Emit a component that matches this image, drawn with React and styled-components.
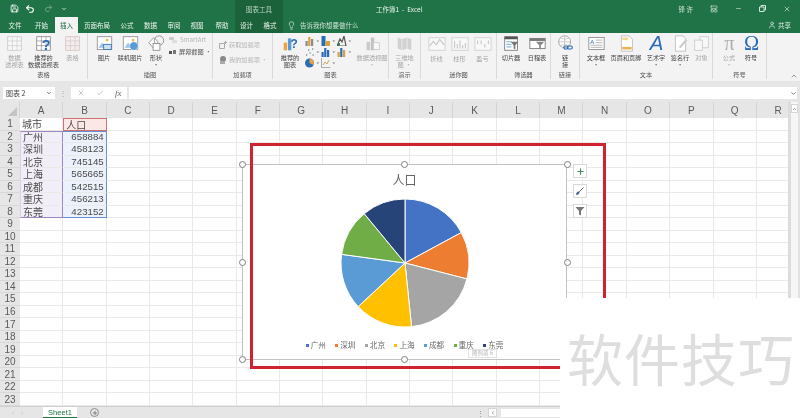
import React from "react";
import styled, { createGlobalStyle } from "styled-components";
import { Save, Undo2, Redo2, X, Minus, Check, Lightbulb, User, Plus, ChevronUp, ChevronDown, ChevronLeft, ChevronRight, LayoutPanelTop } from "lucide-react";

const GlobalStyle = createGlobalStyle`
  html, body { margin: 0; padding: 0; background: #fff; }
  body { font-family: "Noto Sans CJK SC", "Liberation Sans", sans-serif; }
`;

const green = "#1f7346";
const CJK = `"Liberation Sans", "Noto Sans CJK SC", sans-serif`;

const Page = styled.div`
  width: 800px;
  height: 418px;
  position: relative;
  overflow: hidden;
  display: flex;
  flex-direction: column;
  background: #e6e6e6;
  filter: blur(0.3px);
`;

/* ---- title bar + tabs ---- */
const Head = styled.div`
  height: 33px;
  background: ${green};
  position: relative;
  display: flex;
  flex-direction: column;
  color: #fff;
`;

const ContextBand = styled.div`
  position: absolute;
  left: 235px;
  top: 0;
  width: 48px;
  height: 33px;
  background: #1b6139;
`;

const TitleRow = styled.div`
  height: 17px;
  display: flex;
  align-items: center;
  position: relative;
  padding-left: 10px;
`;

const QuickIcon = styled.span`
  display: inline-flex;
  width: ${p => p.$w || 18}px;
  opacity: ${p => p.$dim ? 0.45 : 1};
`;

const ContextLabel = styled.span`
  position: absolute;
  left: 246px;
  font-size: 6.5px;
  color: #b7d3c3;
`;

const DocTitle = styled.span`
  position: absolute;
  left: 376px;
  font-size: 6.5px;
  color: #eef5f0;
  white-space: pre;
`;

const WindowBtns = styled.div`
  position: absolute;
  right: 9px;
  top: 0;
  height: 17px;
  display: flex;
  align-items: center;
  gap: 17px;
  font-size: 6.5px;
  color: #d5e6db;
`;

const TabRow = styled.div`
  height: 16px;
  display: flex;
  align-items: stretch;
  position: relative;
  padding-left: 2px;
`;

const Tab = styled.div`
  width: ${p => p.$w}px;
  font-size: 6.5px;
  display: flex;
  align-items: center;
  justify-content: center;
  color: ${p => p.$active ? "#1f6e42" : "#eef5f0"};
  background: ${p => p.$active ? "#f3f3f3" : "transparent"};
`;

const TellMe = styled.div`
  margin-left: 5px;
  display: flex;
  align-items: center;
  gap: 4px;
  font-size: 6.5px;
  color: #cfe2d6;
`;

const Share = styled.div`
  position: absolute;
  right: 9px;
  top: 0;
  height: 15px;
  display: flex;
  align-items: center;
  gap: 2px;
  font-size: 6.5px;
  color: #e3efe8;
`;

/* ---- ribbon ---- */
const Ribbon = styled.div`
  height: 48px;
  background: #f3f3f3;
  display: flex;
  position: relative;
`;

const Group = styled.div`
  width: ${p => p.$w}px;
  border-right: ${p => p.$last ? "none" : "1px solid #dadada"};
  margin-bottom: 2px;
  box-sizing: border-box;
  display: flex;
  flex-direction: column;
`;

const GroupBody = styled.div`
  flex: 1;
  display: flex;
  padding-left: ${p => p.$pad || 0}px;
  min-height: 0;
`;

const GroupName = styled.div`
  height: 9px;
  line-height: 9px;
  text-align: center;
  font-size: 6.2px;
  color: #555;
`;

const Big = styled.div`
  width: ${p => p.$w || 26}px;
  flex: none;
  display: flex;
  flex-direction: column;
  align-items: center;
  padding-top: 2px;
  opacity: ${p => p.$off ? 0.45 : 1};
`;

const BigLabel = styled.div`
  margin-top: 2px;
  font-size: 6.2px;
  line-height: 7.4px;
  color: #444;
  text-align: center;
  white-space: pre;
`;

const SmallStack = styled.div`
  display: flex;
  flex-direction: column;
  gap: ${p => p.$gap || 4}px;
  padding-top: ${p => p.$top || 3}px;
  padding-left: ${p => p.$left || 0}px;
`;

const SmallBtn = styled.div`
  display: flex;
  align-items: center;
  gap: 2px;
  height: 9px;
  font-size: 6.2px;
  color: ${p => p.$off ? "#b5b5b5" : "#555"};
  white-space: nowrap;
`;

const MiniGrid = styled.div`
  display: grid;
  grid-template-columns: repeat(3, 16px);
  grid-auto-rows: 11px;
  padding: 3px 0 0 3px;
  width: 48px;
  flex: none;
`;

const Collapse = styled.span`
  position: absolute;
  right: 2px;
  bottom: 1px;
  display: inline-flex;
  color: #666;
`;

const Ico = ({ children, size = 17 }) => (
  <svg width={size} height={size} viewBox="0 0 20 20" fill="none" overflow="visible">{children}</svg>
);

const Sheetish = ({ color = "#9a9a9a", fill = "#fff" }) => (
  <>
    <rect x="2" y="2" width="16" height="16" fill={fill} stroke={color} strokeWidth="1" />
    <path d="M2 7h16M2 12.5h16M7.5 2v16M13 2v16" stroke={color} strokeWidth=".8" />
  </>
);

const Picture = () => (
  <>
    <rect x="1.5" y="2" width="17" height="15" fill="#fff" stroke="#8d8d8d" />
    <path d="M3 15l4-6 3 3 2-2 5 5z" fill="#9cc3e6" />
    <circle cx="13" cy="6" r="1.6" fill="#f0b54a" />
  </>
);

const Spark = ({ d }) => (
  <Ico size={18}>
    <rect x="1" y="3" width="18" height="14" fill="#fff" stroke="#a5a5a5" />
    <path d={d} stroke="#8f8f8f" strokeWidth="1.2" />
  </Ico>
);

const Caret = () => <path d="M11.5 4.5l1.3 1.5 1.3-1.5z" fill="#777" />;

const Mini = ({ a, b }) => (
  <svg width="15" height="10" viewBox="0 0 15 10">
    <rect x="0.5" y="5" width="2.2" height="5" fill={a} />
    <rect x="3.2" y="1" width="2.2" height="9" fill={b} />
    <rect x="6" y="3" width="2.2" height="7" fill={a} />
    <Caret />
  </svg>
);

const Block = ({ a, b }) => (
  <svg width="15" height="10" viewBox="0 0 15 10">
    <rect x="0.5" y="0" width="4" height="10" fill={a} />
    <rect x="4.5" y="5" width="4.5" height="5" fill={b} />
    <Caret />
  </svg>
);

const Peak = ({ a, b }) => (
  <svg width="15" height="10" viewBox="0 0 15 10">
    <path d="M0 10L3 3l2 3 2-6 2 10z" fill="none" stroke={a} strokeWidth="1.2" />
    <rect x="1" y="7" width="2" height="3" fill={b} />
    <Caret />
  </svg>
);

const Scatter = ({ a }) => (
  <svg width="15" height="10" viewBox="0 0 15 10">
    <path d="M1 8h1.2M3 3h1.2M4.5 6h1.2M7 2h1.2M7.5 8h1.2" stroke={a} strokeWidth="1.6" />
    <Caret />
  </svg>
);

const Donut = ({ a, b }) => (
  <svg width="15" height="10" viewBox="0 0 15 10">
    <circle cx="4.5" cy="5" r="4.5" fill={a} />
    <path d="M4.5 5V.5a4.5 4.5 0 0 1 4 6.5z" fill={b} />
    <Caret />
  </svg>
);

const Axis = ({ a }) => (
  <svg width="15" height="10" viewBox="0 0 15 10">
    <path d="M.5 0v9.5h9" fill="none" stroke="#999" strokeWidth=".8" />
    <path d="M2 7l2-3 2 2 2-4" fill="none" stroke={a} strokeWidth=".9" />
    <Caret />
  </svg>
);

// big symbol-style ribbon icons (WordArt A, pi, omega)
const SymbolIcon = ({ children, color, italic, font = "Liberation Serif" }) => (
  <Ico>
    <text
      x="10"
      y="18"
      textAnchor="middle"
      fontSize="24"
      fontFamily={font}
      fontStyle={italic ? "italic" : "normal"}
      fill={color}
    >
      {children}
    </text>
  </Ico>
);

const TABS = [
  ["文件", 26], ["开始", 27], ["插入", 23], ["页面布局", 38], ["公式", 22], ["数据", 25],
  ["审阅", 22], ["视图", 24], ["帮助", 26], ["设计", 23], ["格式", 24]
];

/* ---- formula bar ---- */
const FormulaBar = styled.div`
  height: 21px;
  box-sizing: border-box;
  padding: 6px 3px 3px;
  display: flex;
  align-items: stretch;
  background: #e6e6e6;
`;

const NameBox = styled.div`
  width: 52px;
  background: #fff;
  display: flex;
  align-items: center;
  justify-content: space-between;
  padding: 0 3px;
  box-sizing: border-box;
  font-size: 7px;
  color: #444;
`;

const Grip = styled.div`
  width: 16px;
  text-align: center;
  font-size: 8px;
  line-height: 12px;
  color: #aaa;
`;

const FxBox = styled.div`
  width: 56px;
  margin-right: 2px;
  background: #fff;
  display: flex;
  align-items: center;
  justify-content: space-around;
  color: #aaa;
`;

const FxText = styled.span`
  font-family: "Liberation Serif", serif;
  font-style: italic;
  font-size: 9px;
  color: #666;
`;

const FormulaInput = styled.div`
  flex: 1;
  background: #fff;
  display: flex;
  align-items: center;
  justify-content: flex-end;
  color: #777;
`;

/* ---- sheet ---- */
const Work = styled.div`
  flex: 1;
  display: flex;
  min-height: 0;
`;

const SheetArea = styled.div`
  flex: 1;
  min-width: 0;
  overflow: hidden;
  background: #fff;
`;

const Table = styled.div`
  display: grid;
  grid-template-columns: 20px repeat(18, 43.35px);
  grid-template-rows: 16px repeat(23, 12.52px);
  width: 800px;
`;

const ColHead = styled.div`
  background: #e6e6e6;
  border-right: 1px solid #d4d4d4;
  box-sizing: border-box;
  display: flex;
  align-items: center;
  justify-content: center;
  font: 10px ${CJK};
  color: #5a5a5a;
`;

const Corner = styled(ColHead)`
  position: relative;
  &::after {
    content: "";
    position: absolute;
    right: 2px;
    bottom: 2px;
    border-style: solid;
    border-width: 0 0 9px 9px;
    border-color: transparent transparent #c4c4c4 transparent;
  }
`;

const RowHead = styled.div`
  background: #e6e6e6;
  border-bottom: 1px solid #d8d8d8;
  box-sizing: border-box;
  display: flex;
  align-items: center;
  justify-content: center;
  font: 10px ${CJK};
  color: #5a5a5a;
`;

const Cell = styled.div`
  box-sizing: border-box;
  border-right: 1px solid #e9e9e9;
  border-bottom: 1px solid #e9e9e9;
  padding: 0 2px;
  display: flex;
  align-items: center;
  justify-content: ${p => p.$num ? "flex-end" : "flex-start"};
  font: ${p => p.$num ? "9.7px" : "10px"} ${CJK};
  color: #4a4a4a;
  background: ${p => p.$tint || "transparent"};
  ${p => p.$edge && `
    border-right: 1px solid ${p.$edge};
    ${p.$left ? `border-left: 1px solid ${p.$left};` : ""}
    ${p.$top ? `border-top: 1px solid ${p.$edge};` : ""}
    ${p.$end ? `border-bottom: 1px solid ${p.$edge};` : ""}
  `}
`;

const VScroll = styled.div`
  width: 12px;
  background: #f6f6f6;
  border-left: 3px solid #dcdcdc;
  border-right: 2px solid #e2e2e2;
  display: flex;
  justify-content: center;
  padding-top: 2px;
  color: #666;
  box-sizing: border-box;
`;

const ScrollCap = styled.span`
  display: inline-flex;
  width: ${p => p.$w || 9}px;
  height: 9px;
  background: #fff;
  border: 1px solid #d5d5d5;
  box-sizing: border-box;
  align-items: center;
  justify-content: center;
`;

/* ---- bottom tab strip ---- */
const SheetTabs = styled.div`
  height: 12px;
  flex: none;
  display: flex;
  align-items: stretch;
  background: #e6e6e6;
  border-top: 1px solid #cfcfcf;
  box-sizing: border-box;
  padding-left: 10px;
  color: #bbb;
`;

const TabNav = styled.div`
  width: 33px;
  display: flex;
  align-items: center;
  gap: 3px;
`;

const SheetTab = styled.div`
  width: 34px;
  background: #fff;
  border-bottom: 1px solid ${green};
  font: 7.5px ${CJK};
  color: ${green};
  display: flex;
  align-items: center;
  justify-content: center;
`;

const AddSheet = styled.span`
  margin: 1px 0 0 13px;
  width: 9px;
  height: 9px;
  border-radius: 50%;
  border: 1px solid #8c8c8c;
  box-sizing: border-box;
  color: #666;
  display: inline-flex;
  align-items: center;
  justify-content: center;
`;

const HBar = styled.div`
  margin-left: auto;
  width: 323px;
  display: flex;
  align-items: center;
  gap: 4px;
  color: #888;
  font-size: 7px;
`;

const HTrack = styled.div`
  flex: 1;
  height: 8px;
  background: #fff;
`;

/* ---- chart + overlays ---- */
const Chart = styled.div`
  position: absolute;
  left: 242px;
  top: 164px;
  width: 325px;
  height: 196px;
  background: #fff;
  border: 1.5px solid #c2c2c2;
  box-sizing: border-box;
  display: flex;
  flex-direction: column;
  align-items: center;
`;

const ChartTitle = styled.div`
  margin-top: 6px;
  height: 17px;
  line-height: 17px;
  font-size: 12px;
  color: #666;
`;

const PieWrap = styled.svg`
  margin-top: 10px;
  display: block;
`;

const Legend = styled.div`
  margin-top: 12px;
  display: flex;
  gap: 9.4px;
  font-size: 7.6px;
  line-height: 10px;
  color: #6a6a6a;
`;

const LegendItem = styled.div`
  display: flex;
  align-items: center;
  gap: 2px;
`;

const Swatch = styled.span`
  width: 3px;
  height: 3px;
  background: ${p => p.$color};
`;

const LegendTip = styled.div`
  position: absolute;
  left: 225px;
  top: 184px;
  width: 29px;
  height: 9px;
  background: #fff;
  border: 1px solid #e2e2e2;
  box-sizing: border-box;
  font-size: 5.5px;
  line-height: 7px;
  text-align: center;
  color: #b5b5b5;
`;

const Handle = styled.span`
  position: absolute;
  left: ${p => p.$x}px;
  top: ${p => p.$y}px;
  width: 5px;
  height: 5px;
  margin: -3.5px 0 0 -3.5px;
  border-radius: 50%;
  background: #fff;
  border: 1px solid #808080;
`;

const SideTools = styled.div`
  position: absolute;
  left: 573px;
  top: 164px;
  display: flex;
  flex-direction: column;
  gap: 6px;
`;

const SideBtn = styled.div`
  width: 14px;
  height: 14px;
  box-sizing: border-box;
  background: #fff;
  border: 1px solid #d9d9d9;
  display: flex;
  align-items: center;
  justify-content: center;
  color: ${p => p.$color};
`;

const RedFrame = styled.div`
  position: absolute;
  left: 250px;
  top: 143px;
  width: 356px;
  height: 226px;
  border: 3px solid #cf2330;
  box-sizing: border-box;
  pointer-events: none;
`;

const Watermark = styled.div`
  position: absolute;
  left: 560px;
  top: 298px;
  width: 240px;
  height: 120px;
  background: #fff;
  padding: 25px 0 0 7px;
  box-sizing: border-box;
  font-size: 56px;
  line-height: 68px;
  letter-spacing: 1px;
  color: #dedede;
  white-space: nowrap;
`;

const DATA = [
  ["广州", 658884, "#4472c4"],
  ["深圳", 458123, "#ed7d31"],
  ["北京", 745145, "#a5a5a5"],
  ["上海", 565665, "#ffc000"],
  ["成都", 542515, "#5b9bd5"],
  ["重庆", 456213, "#70ad47"],
  ["东莞", 423152, "#264478"]
];

const COLS = "ABCDEFGHIJKLMNOPQR".split("");

function Pie({ r = 64 }) {
  const total = DATA.reduce((s, d) => s + d[1], 0);
  const c = r + 1;
  let acc = 0;
  return (
    <PieWrap width={c * 2} height={c * 2}>
      {DATA.map(([name, v, color]) => {
        const a0 = (acc / total) * 2 * Math.PI;
        acc += v;
        const a1 = (acc / total) * 2 * Math.PI;
        const large = a1 - a0 > Math.PI ? 1 : 0;
        const d = `M${c} ${c}L${c + r * Math.sin(a0)} ${c - r * Math.cos(a0)}A${r} ${r} 0 ${large} 1 ${c + r * Math.sin(a1)} ${c - r * Math.cos(a1)}Z`;
        return <path key={name} d={d} fill={color} stroke="#fff" strokeWidth="1" />;
      })}
    </PieWrap>
  );
}

function SheetGrid() {
  const cells = [];
  cells.push(<Corner key="corner" />);
  COLS.forEach(c => cells.push(<ColHead key={c}>{c}</ColHead>));
  for (let r = 1; r <= 23; r++) {
    cells.push(<RowHead key={`r${r}`}>{r}</RowHead>);
    COLS.forEach((c, i) => {
      const row = r >= 2 && r <= 8 ? DATA[r - 2] : null;
      let props = {};
      let text = null;
      if (i === 0 && r === 1) text = "城市";
      if (i === 1 && r === 1) {
        text = "人口";
        props = { $tint: "#fbe8e6", $edge: "#d0706e", $left: "#d0706e", $top: true, $end: true };
      }
      if (row && i === 0) {
        text = row[0];
        props = { $tint: "#f2eef8", $edge: "#9c86bd", $left: "#d8d0e6", $top: r === 2, $end: r === 8 };
      }
      if (row && i === 1) {
        text = row[1];
        props = { $tint: "#ebf2fb", $edge: "#6a8fd0", $top: r === 2, $end: r === 8, $num: true };
      }
      cells.push(<Cell key={`${c}${r}`} {...props}>{text}</Cell>);
    });
  }
  return <Table>{cells}</Table>;
}

const HANDLES = [[242.5, 164], [404.5, 164], [567, 164], [242.5, 262], [567, 262], [242.5, 359.5], [404.5, 359.5]];

export default function App() {
  return (
    <Page>
      <GlobalStyle />
      <Head>
        <ContextBand />
        <TitleRow>
          <QuickIcon $w={15}><Save size={9} strokeWidth={2.2} /></QuickIcon>
          <QuickIcon $w={19}><Undo2 size={10} strokeWidth={2.6} /></QuickIcon>
          <QuickIcon $w={17} $dim><Redo2 size={9} /></QuickIcon>
          <QuickIcon $w={8}><ChevronDown size={6} strokeWidth={3} /></QuickIcon>
          <ContextLabel>图表工具</ContextLabel>
          <DocTitle>工作簿1  -  Excel</DocTitle>
          <WindowBtns>
            <span>锋 许</span>
            <LayoutPanelTop size={8} />
            <Minus size={7} />
            <svg width="7" height="7" viewBox="0 0 7 7" fill="none" stroke="currentColor"><path d="M.5 2h4.5v4.5H.5zM2 2V.5h4.5V5H5" /></svg>
            <X size={8} />
          </WindowBtns>
        </TitleRow>
        <TabRow>
          {TABS.map(([t, w]) => <Tab key={t} $w={w} $active={t === "插入"}>{t}</Tab>)}
          <TellMe><Lightbulb size={9} />告诉我你想要做什么</TellMe>
          <Share><User size={8} />共享</Share>
        </TabRow>
      </Head>

      <Ribbon>
        <Group $w={88}>
          <GroupBody>
            <Big $w={29} $off>
              <Ico><Sheetish /></Ico>
              <BigLabel>{"数据\n透视表"}</BigLabel>
            </Big>
            <Big $w={29}>
              <Ico>
                <Sheetish color="#8a8a8a" />
                <text x="8" y="18" fontSize="17" fontWeight="700" fill="#2b6cb8" fontFamily="Liberation Sans">?</text>
              </Ico>
              <BigLabel>{"推荐的\n数据透视表"}</BigLabel>
            </Big>
            <Big $w={29} $off>
              <Ico><Sheetish color="#b08a8a" fill="#f6eaea" /></Ico>
              <BigLabel>表格</BigLabel>
            </Big>
          </GroupBody>
          <GroupName>表格</GroupName>
        </Group>

        <Group $w={125}>
          <GroupBody $pad={3}>
            <Big>
              <Ico><Picture /><rect x="9" y="11" width="9" height="6" fill="#cfe0f2" stroke="#2f75b5" /></Ico>
              <BigLabel>图片</BigLabel>
            </Big>
            <Big>
              <Ico><Picture /><circle cx="14" cy="13" r="5" fill="#5b9bd5" stroke="#fff" strokeWidth=".6" /></Ico>
              <BigLabel>联机图片</BigLabel>
            </Big>
            <Big>
              <Ico>
                <path d="M1 9l6-6 5 5-6 7z" fill="#fff" stroke="#8a8a8a" />
                <circle cx="13" cy="6.5" r="5.5" fill="none" stroke="#8a8a8a" />
                <rect x="6" y="10" width="8" height="8" fill="#fff" stroke="#8a8a8a" />
              </Ico>
              <BigLabel>{"形状\n·"}</BigLabel>
            </Big>
            <SmallStack $top={2} $gap={3}>
              <SmallBtn $off>
                <svg width="9" height="8" viewBox="0 0 9 8"><rect x="0" y="1" width="5" height="3" fill="#ccc" /><rect x="3" y="4" width="5" height="3" fill="#ddd" /></svg>
                SmartArt
              </SmallBtn>
              <SmallBtn>
                <svg width="8" height="6" viewBox="0 0 8 6"><rect y="2" width="3" height="3" fill="#555" /><rect x="4" y="1" width="3" height="4" fill="#777" /></svg>
                屏幕截图 ·
              </SmallBtn>
            </SmallStack>
          </GroupBody>
          <GroupName>插图</GroupName>
        </Group>

        <Group $w={60}>
          <GroupBody>
            <SmallStack $top={7} $gap={6} $left={6}>
              <SmallBtn $off>
                <svg width="8" height="8" viewBox="0 0 8 8" fill="none" stroke="#aaa"><path d="M.5 2.5h5v5h-5zM6.5 0v3M5 1.5h3" /></svg>
                获取加载项
              </SmallBtn>
              <SmallBtn $off>
                <svg width="8" height="8" viewBox="0 0 8 8"><circle cx="4" cy="3" r="3" fill="#888" /><rect x="1" y="5" width="5" height="3" fill="#aaa" /></svg>
                我的加载项 ·
              </SmallBtn>
            </SmallStack>
          </GroupBody>
          <GroupName>加载项</GroupName>
        </Group>

        <Group $w={116}>
          <GroupBody $pad={5}>
            <Big $w={24}>
              <Ico>
                <rect x="2" y="9" width="4" height="9" fill="#f0a33a" />
                <rect x="7" y="4" width="4" height="14" fill="#5b9bd5" />
                <text x="10" y="15" fontSize="14" fontWeight="700" fill="#2b6cb8" fontFamily="Liberation Sans">?</text>
              </Ico>
              <BigLabel>{"推荐的\n图表"}</BigLabel>
            </Big>
            <MiniGrid>
              <Mini a="#8a8a8a" b="#d9a13c" />
              <Block a="#2b6cb8" b="#d9a13c" />
              <Peak a="#555" b="#2f8a56" />
              <Scatter a="#7a8fa5" />
              <Mini a="#2b6cb8" b="#2b6cb8" />
              <Mini a="#d9a13c" b="#2b6cb8" />
              <Donut a="#2b6cb8" b="#e6a23c" />
              <Axis a="#c9a04a" />
            </MiniGrid>
            <Big $w={38} $off>
              <Ico>
                <rect x="3" y="8" width="4" height="10" fill="#999" />
                <rect x="8" y="3" width="4" height="15" fill="#888" />
                <rect x="11" y="9" width="7" height="8" fill="#fff" stroke="#999" />
              </Ico>
              <BigLabel>{"数据透视图\n·"}</BigLabel>
            </Big>
          </GroupBody>
          <GroupName>图表</GroupName>
        </Group>

        <Group $w={32}>
          <GroupBody>
            <Big $w={31} $off>
              <Ico>
                <path d="M2 3l5 2 6-2 5 2v13l-5-2-6 2-5-2z" fill="#a8a8a8" />
                <path d="M7 5v13M13 3v13" stroke="#eee" />
              </Ico>
              <BigLabel>{"三维地\n图 ·"}</BigLabel>
            </Big>
          </GroupBody>
          <GroupName>演示</GroupName>
        </Group>

        <Group $w={76}>
          <GroupBody $pad={4}>
            <Big $w={23} $off>
              <Spark d="M2 12l4-5 3 4 4-6 5 6" />
              <BigLabel>折线</BigLabel>
            </Big>
            <Big $w={23} $off>
              <Spark d="M4 15V7M7 15V10M10 15V6M13 15V11M16 15V9" />
              <BigLabel>柱形</BigLabel>
            </Big>
            <Big $w={23} $off>
              <Spark d="M4 6v4M8 6v4M12 10v4M16 6v4" />
              <BigLabel>盈亏</BigLabel>
            </Big>
          </GroupBody>
          <GroupName>迷你图</GroupName>
        </Group>

        <Group $w={54}>
          <GroupBody $pad={1}>
            <Big>
              <Ico>
                <rect x="2" y="2" width="15" height="16" fill="#fff" stroke="#777" />
                <rect x="2" y="2" width="15" height="3" fill="#555" />
                <path d="M4 8h6M4 11h6M4 14h6" stroke="#5b9bd5" />
                <path d="M9 8h9l-3.5 4v5l-2-1v-4z" fill="#777" />
              </Ico>
              <BigLabel>切片器</BigLabel>
            </Big>
            <Big>
              <Ico>
                <rect x="1" y="4" width="18" height="12" fill="#fff" stroke="#777" />
                <rect x="1" y="4" width="18" height="3" fill="#777" />
                <path d="M8 8h10l-4 4v5l-2-1v-4z" fill="#888" />
              </Ico>
              <BigLabel>日程表</BigLabel>
            </Big>
          </GroupBody>
          <GroupName>筛选器</GroupName>
        </Group>

        <Group $w={29}>
          <GroupBody>
            <Big $w={28}>
              <Ico>
                <circle cx="9" cy="8" r="7" fill="#fff" stroke="#999" />
                <path d="M2 8h14M9 1v14M4 3.5c3 1.5 7 1.5 10 0M4 12.5c3-1.5 7-1.5 10 0" stroke="#aaa" strokeWidth=".7" />
                <rect x="8" y="13" width="5" height="3.5" rx="1.7" fill="none" stroke="#2b6cb8" strokeWidth="1.3" />
                <rect x="12" y="13" width="6" height="3.5" rx="1.7" fill="none" stroke="#2b6cb8" strokeWidth="1.3" />
              </Ico>
              <BigLabel>{"链\n接"}</BigLabel>
            </Big>
          </GroupBody>
          <GroupName>链接</GroupName>
        </Group>

        <Group $w={133}>
          <GroupBody $pad={3}>
            <Big $w={26}>
              <Ico>
                <rect x="1" y="3" width="18" height="14" fill="#fff" stroke="#8a8a8a" />
                <text x="2.5" y="10" fontSize="7" fill="#2b6cb8" fontFamily="Liberation Sans">A</text>
                <path d="M9 6h8M9 9h8M3 12h14M3 14.5h14" stroke="#aaa" />
              </Ico>
              <BigLabel>{"文本框\n·"}</BigLabel>
            </Big>
            <Big $w={34}>
              <Ico>
                <path d="M4 1h9l4 4v14H4z" fill="#fff" stroke="#bbb" />
                <rect x="5" y="3" width="7" height="3" fill="#f5d78e" />
                <rect x="5" y="14" width="11" height="3" fill="#e6b450" />
              </Ico>
              <BigLabel>页眉和页脚</BigLabel>
            </Big>
            <Big $w={26}>
              <SymbolIcon italic font="Liberation Sans" color="#2b6cb8">A</SymbolIcon>
              <BigLabel>{"艺术字\n·"}</BigLabel>
            </Big>
            <Big $w={22}>
              <Ico>
                <path d="M4 1h9l3 3v15H4z" fill="#fff" stroke="#bbb" />
                <path d="M8 14l8-9 2 1.5-8 9z" fill="#ccc" />
              </Ico>
              <BigLabel>{"签名行\n·"}</BigLabel>
            </Big>
            <Big $w={21} $off>
              <Ico>
                <rect x="8" y="2" width="10" height="13" fill="#fff" stroke="#999" />
                <rect x="2" y="6" width="9" height="12" fill="#fff" stroke="#999" />
              </Ico>
              <BigLabel>对象</BigLabel>
            </Big>
          </GroupBody>
          <GroupName>文本</GroupName>
        </Group>

        <Group $w={54}>
          <GroupBody $pad={5}>
            <Big $w={22} $off>
              <SymbolIcon color="#555">π</SymbolIcon>
              <BigLabel>{"公式\n·"}</BigLabel>
            </Big>
            <Big $w={22}>
              <SymbolIcon color="#2b6cb8">Ω</SymbolIcon>
              <BigLabel>符号</BigLabel>
            </Big>
          </GroupBody>
          <GroupName>符号</GroupName>
        </Group>

        <Collapse><ChevronUp size={8} /></Collapse>
      </Ribbon>

      <FormulaBar>
        <NameBox>图表 2<ChevronDown size={6} strokeWidth={3} /></NameBox>
        <Grip>⋮</Grip>
        <FxBox>
          <X size={8} />
          <Check size={8} />
          <FxText>fx</FxText>
        </FxBox>
        <FormulaInput><ChevronDown size={7} strokeWidth={3} /></FormulaInput>
      </FormulaBar>

      <Work>
        <SheetArea><SheetGrid /></SheetArea>
        <VScroll><ScrollCap $w={7}><ChevronUp size={6} strokeWidth={3} /></ScrollCap></VScroll>
      </Work>

      <SheetTabs>
        <TabNav><ChevronLeft size={6} /><ChevronRight size={6} /></TabNav>
        <SheetTab>Sheet1</SheetTab>
        <AddSheet><Plus size={6} strokeWidth={3} /></AddSheet>
        <HBar>
          <span>⋮</span>
          <ScrollCap><ChevronLeft size={6} strokeWidth={3} /></ScrollCap>
          <HTrack />
        </HBar>
      </SheetTabs>

      <Chart>
        <ChartTitle>人口</ChartTitle>
        <Pie />
        <Legend>
          {DATA.map(([name, , color]) => (
            <LegendItem key={name}><Swatch $color={color} />{name}</LegendItem>
          ))}
        </Legend>
        <LegendTip>图例项 6</LegendTip>
      </Chart>
      {HANDLES.map(([x, y]) => <Handle key={`${x}-${y}`} $x={x} $y={y} />)}
      <SideTools>
        <SideBtn $color="#3f8f63"><Plus size={9} strokeWidth={3} /></SideBtn>
        <SideBtn>
          <svg width="10" height="10" viewBox="0 0 10 10"><path d="M8.5 1.5L4 6" stroke="#6b6b6b" strokeWidth="1" /><path d="M1 9c.2-2 1-3.3 2.5-3.5l1 1C4.3 8 3 8.8 1 9z" fill="#3f5f86" /></svg>
        </SideBtn>
        <SideBtn>
          <svg width="10" height="10" viewBox="0 0 10 10"><path d="M.5 1h9L6 5v4.5L4 8.5V5z" fill="#777" /></svg>
        </SideBtn>
      </SideTools>
      <RedFrame />
      <Watermark>软件技巧</Watermark>
    </Page>
  );
}
